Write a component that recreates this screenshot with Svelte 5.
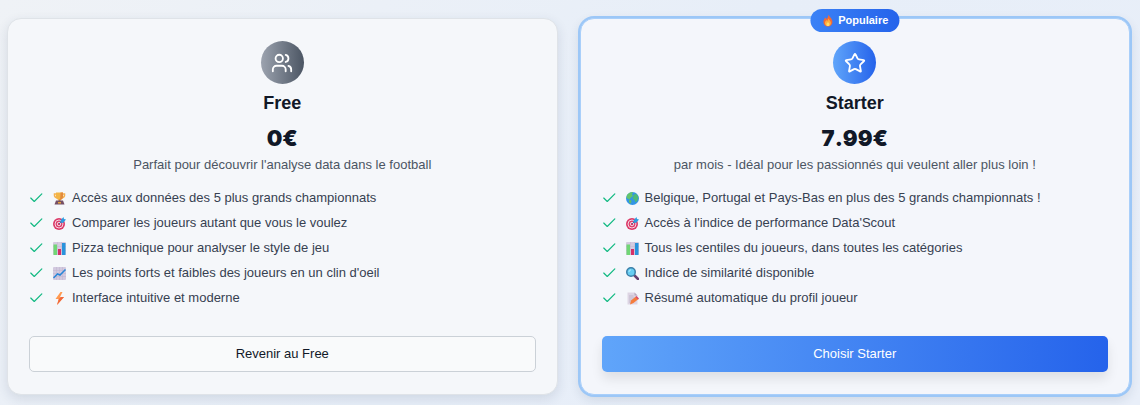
<script lang="ts">
	interface Feature {
		icon: string;
		text: string;
	}

	interface Plan {
		id: string;
		name: string;
		price: string;
		description: string;
		cta: string;
		popular: boolean;
		features: Feature[];
	}

	const plans: Plan[] = [
		{
			id: 'free',
			name: 'Free',
			price: '0€',
			description: "Parfait pour découvrir l'analyse data dans le football",
			cta: 'Revenir au Free',
			popular: false,
			features: [
				{ icon: 'trophy', text: 'Accès aux données des 5 plus grands championnats' },
				{ icon: 'target', text: 'Comparer les joueurs autant que vous le voulez' },
				{ icon: 'bars', text: 'Pizza technique pour analyser le style de jeu' },
				{ icon: 'trend', text: "Les points forts et faibles des joueurs en un clin d'oeil" },
				{ icon: 'bolt', text: 'Interface intuitive et moderne' }
			]
		},
		{
			id: 'starter',
			name: 'Starter',
			price: '7.99€',
			description: 'par mois - Idéal pour les passionnés qui veulent aller plus loin !',
			cta: 'Choisir Starter',
			popular: true,
			features: [
				{
					icon: 'globe',
					text: 'Belgique, Portugal et Pays-Bas en plus des 5 grands championnats !'
				},
				{ icon: 'target', text: "Accès à l'indice de performance Data'Scout" },
				{ icon: 'bars', text: 'Tous les centiles du joueurs, dans toutes les catégories' },
				{ icon: 'search', text: 'Indice de similarité disponible' },
				{ icon: 'memo', text: 'Résumé automatique du profil joueur' }
			]
		}
	];
</script>

{#snippet emoji(name: string)}
	<svg class="emoji" viewBox="0 0 26 26" aria-hidden="true">
		{#if name === 'trophy'}
			<path d="M7 4H3v3c0 3 2 4 6 5M19 4h4v3c0 3-2 4-6 5" fill="none" stroke="#f5b04c" stroke-width="3" />
			<path d="M6 1h14v8c0 4-3 7-7 7s-7-3-7-7z" fill="#f3b546" />
			<path d="M15 1h5v8c0 4-3 7-7 7 2-4 2-9 2-15z" fill="#e28a3c" />
			<path d="M11 15h4v4h-4z" fill="#d98324" />
			<path d="M6 17h14l3 8H3z" fill="#755065" />
			<path d="M10 20h6v3h-6z" fill="#e6a33c" />
		{:else if name === 'target'}
			<circle cx="12" cy="14" r="12" fill="#dc3a68" />
			<circle cx="12" cy="14" r="8" fill="none" stroke="#f3d5e2" stroke-width="2" />
			<circle cx="12" cy="14" r="3.5" fill="none" stroke="#f3d5e2" stroke-width="2" />
			<path d="m12 14 9-9" stroke="#3976a8" stroke-width="2" />
			<path d="m15 7 6-7 1 4 4 1-6 7-5-1z" fill="#2d9de0" />
		{:else if name === 'bars'}
			<rect width="26" height="26" rx="2" fill="#d5cbe0" />
			<path d="M0 9h26M0 17h26M9 0v26M17 0v26" stroke="#c2b7cf" />
			<rect x="1" y="5" width="7" height="21" fill="#70d675" />
			<rect x="10" y="14" width="6" height="12" fill="#d52f68" />
			<rect x="18" y="2" width="7" height="24" fill="#2993dc" />
		{:else if name === 'trend'}
			<rect width="26" height="26" rx="2" fill="#d2c9df" />
			<path d="M0 7h26M0 13h26M0 19h26M7 0v26M13 0v26M19 0v26" stroke="#beb3cc" />
			<path d="m1 22 8-8 5 2L25 5" fill="none" stroke="#2887d8" stroke-width="3" />
		{:else if name === 'bolt'}
			<path d="M15 0 5 14h6L8 26l14-16h-8l5-10z" fill="#ff9a50" />
			<path d="M12 14 8 26l14-16h-6z" fill="#f0673e" />
		{:else if name === 'globe'}
			<circle cx="13" cy="13" r="13" fill="#3295e6" />
			<path d="M2 6c3-4 7-6 12-6l-2 5 2 3-5 4-2 3-6-3z" fill="#62c46c" />
			<path d="m15 6 5-3 5 7-2 7-4 4-2-5-4-3 2-4z" fill="#4cb979" />
			<path d="m6 15 5 2-1 6-4-2z" fill="#62bd68" />
		{:else if name === 'search'}
			<path d="m17 17 7 7" stroke="#674071" stroke-width="5" stroke-linecap="round" />
			<circle cx="10" cy="10" r="8.5" fill="#67cdf3" stroke="#3b7fa8" stroke-width="3" />
			<path d="M6 10c0-3 2-4 4-4" fill="none" stroke="#b9efff" stroke-width="2" />
		{:else if name === 'memo'}
			<path d="M3 1h14l6 6v18H3z" fill="#ddd5e4" />
			<path d="M17 1v6h6z" fill="#b5a8be" />
			<path d="M6 8h9M6 12h12M6 16h9M6 20h5" stroke="#b8adc2" stroke-width="1.5" />
			<path d="m8 25 2-8 10-8 5 5-10 8z" fill="#f57c3c" />
			<path d="m21 8 5 5-2 2-5-5z" fill="#dc466a" />
		{:else if name === 'fire'}
			<path d="M14 1c1 4 8 8 8 15 0 5-4 9-9 9s-9-4-9-9c0-4 2-7 4-9l2 3c2-2 4-5 4-9z" fill="#f46b35" />
			<path d="M14 9c1 3 5 5 5 9 0 4-3 6-6 6s-6-2-6-6c0-3 2-4 3-6l2 2z" fill="#ffad3b" />
			<path d="M13 16c2 2 3 3 3 5s-1 3-3 3-3-1-3-3 1-3 3-5z" fill="#ffdb68" />
		{/if}
	</svg>
{/snippet}

<main class="plans">
	{#each plans as plan (plan.id)}
		<section class="card" class:popular={plan.popular} aria-labelledby="plan-{plan.id}">
			{#if plan.popular}
				<div class="badge">{@render emoji('fire')}<span>Populaire</span></div>
			{/if}
			<div class="plan-icon">
				<svg viewBox="0 0 24 24" aria-hidden="true">
					{#if plan.popular}
						<path
							d="M11.5 2.3a.5.5 0 0 1 .95 0l2.3 4.7a2.1 2.1 0 0 0 1.6 1.1l5.2.8a.5.5 0 0 1 .3.9l-3.8 3.7a2.1 2.1 0 0 0-.6 1.9l.9 5.1a.5.5 0 0 1-.8.6l-4.6-2.4a2.1 2.1 0 0 0-2 0l-4.6 2.4a.5.5 0 0 1-.8-.6l.9-5.1a2.1 2.1 0 0 0-.6-1.9L2.1 9.8a.5.5 0 0 1 .3-.9l5.2-.8a2.1 2.1 0 0 0 1.6-1.1z"
						/>
					{:else}
						<path d="M16 21v-2a4 4 0 0 0-4-4H6a4 4 0 0 0-4 4v2" />
						<circle cx="9" cy="7" r="4" />
						<path d="M22 21v-2a4 4 0 0 0-3-3.87" />
						<path d="M16 3.13a4 4 0 0 1 0 7.75" />
					{/if}
				</svg>
			</div>
			<h2 id="plan-{plan.id}">{plan.name}</h2>
			<p class="price">{plan.price}</p>
			<p class="description">{plan.description}</p>
			<ul>
				{#each plan.features as feature}
					<li>
						<svg class="check" viewBox="0 0 24 24" aria-hidden="true">
							<path d="M22 5 9 18l-6-6" />
						</svg>
						<span class="feature">{@render emoji(feature.icon)}<span>{feature.text}</span></span>
					</li>
				{/each}
			</ul>
			<button type="button">{plan.cta}</button>
		</section>
	{/each}
</main>

<style>
	:global(body) {
		margin: 0;
		background: linear-gradient(135deg, #eff2f6, #e7eef8 50%, #e9eff9);
		font-family: 'Liberation Sans', Arial, sans-serif;
	}

	.plans {
		display: grid;
		grid-template-columns: 1fr 1fr;
		gap: 22px;
		padding: 18px 10px 10px 7px;
	}

	.card {
		position: relative;
		display: flex;
		flex-direction: column;
		align-items: center;
		padding: 22px 21px;
		border: 1px solid #dfe3e8;
		border-radius: 14px;
		background: #f5f7fa;
		box-shadow: 0 4px 12px rgb(30 50 80 / 12%);
	}

	.card.popular {
		border-color: #a9cffa;
		background: #f4f6fb;
		box-shadow:
			0 0 0 2px #9cc7f7,
			0 4px 12px rgb(30 50 80 / 14%);
	}

	.badge {
		position: absolute;
		top: -10px;
		left: 50%;
		transform: translateX(-50%);
		display: flex;
		align-items: center;
		gap: 4px;
		padding: 0 11px;
		border-radius: 12px;
		background: linear-gradient(90deg, #3b82f6, #2563eb);
		color: #fff;
		font-size: 11px;
		font-weight: 700;
		line-height: 23px;
	}

	.emoji {
		flex: none;
		width: 13px;
		height: 13px;
	}

	.plan-icon {
		display: grid;
		place-items: center;
		width: 43px;
		height: 43px;
		border-radius: 50%;
		background: linear-gradient(90deg, #9ca3af, #4b5563);
	}

	.popular .plan-icon {
		background: linear-gradient(90deg, #60a5fa, #2563eb);
	}

	.plan-icon svg {
		width: 22px;
		height: 22px;
		fill: none;
		stroke: #fff;
		stroke-width: 2;
		stroke-linecap: round;
		stroke-linejoin: round;
	}

	h2,
	p,
	ul {
		margin: 0;
	}

	h2 {
		margin-top: 7px;
		color: #111827;
		font-size: 18px;
		line-height: 25px;
	}

	.price {
		margin-top: 7px;
		color: #111827;
		font-family: Inter, 'Liberation Sans', sans-serif;
		font-size: 22px;
		font-weight: 900;
		font-kerning: none;
		line-height: 30px;
	}

	.description {
		margin-top: 3px;
		color: #4b5563;
		font-size: 13px;
		line-height: 18px;
	}

	ul {
		display: flex;
		flex-direction: column;
		gap: 7px;
		align-self: stretch;
		margin-top: 15px;
		padding: 0;
		list-style: none;
	}

	li,
	.feature {
		display: flex;
		align-items: center;
	}

	li {
		gap: 10px;
		color: #374151;
		font-size: 13px;
		line-height: 18px;
	}

	.feature {
		gap: 6px;
	}

	.check {
		flex: none;
		width: 14px;
		height: 14px;
		fill: none;
		stroke: #10b981;
		stroke-width: 2;
		stroke-linecap: round;
		stroke-linejoin: round;
	}

	button {
		align-self: stretch;
		height: 36px;
		margin-top: 29px;
		padding: 0 12px 2px;
		border: 1px solid #cbd1d7;
		border-radius: 5px;
		background: #f9fafb;
		color: #111827;
		font-family: inherit;
		font-size: 13px;
		cursor: pointer;
	}

	.popular button {
		border: 0;
		background: linear-gradient(90deg, #60a5fa, #2563eb);
		box-shadow: 0 7px 12px rgb(0 0 0 / 9%);
		color: #fff;
	}
</style>
